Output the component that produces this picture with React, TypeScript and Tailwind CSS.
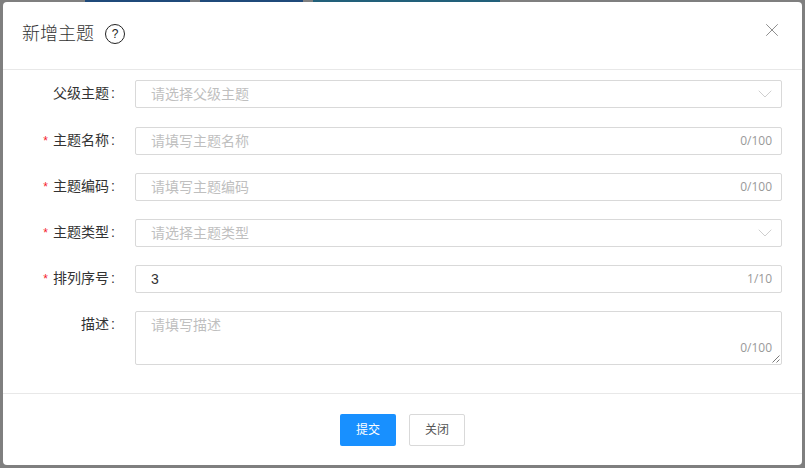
import React from "react";
import { ChevronDown, X } from "lucide-react";

const FONT = "[font-family:'Liberation_Sans','Noto_Sans_CJK_SC',sans-serif]";

function Counter({ text }: { text: string }) {
  return <span className="absolute right-[9px] top-[5px] font-['Open_Sans'] text-[12px] leading-[16px] text-[#999]">{text}</span>;
}

function FieldLabel({ text, required }: { text: string; required?: boolean }) {
  return (
    <label className="flex h-[27px] w-[132px] shrink-0 items-center justify-end pr-[20px] text-[14px] text-[#333]">
      {required && <span className="mr-[5px] text-[12px] text-[#f5222d]">*</span>}
      {text}
      <span className="ml-[2px] w-[4px]">:</span>
    </label>
  );
}

function TextRow({ label, placeholder, counter, value, required }: { label: string; placeholder: string; counter: string; value?: string; required?: boolean }) {
  return (
    <div className="flex h-[28px]">
      <FieldLabel text={label} required={required} />
      <div className="relative h-[28px] flex-1 rounded-[2px] border border-[#d9d9d9] pl-[15px] text-[14px] leading-[26px]">
        {value ? <span className="text-[#333]">{value}</span> : <span className="text-[#bfbfbf]">{placeholder}</span>}
        <Counter text={counter} />
      </div>
    </div>
  );
}

function SelectRow({ label, placeholder, required }: { label: string; placeholder: string; required?: boolean }) {
  return (
    <div className="flex h-[28px]">
      <FieldLabel text={label} required={required} />
      <div className="flex h-[28px] flex-1 items-center justify-between rounded-[2px] border border-[#d9d9d9] pl-[15px] pr-[4px] text-[14px]">
        <span className="text-[#bfbfbf]">{placeholder}</span>
        <ChevronDown className="h-[24px] w-[24px] text-[#bfbfbf]" strokeWidth={0.75} />
      </div>
    </div>
  );
}

export default function App() {
  return (
    <div className={`relative h-[468px] w-[805px] overflow-hidden bg-[#7f7f7f] ${FONT}`}>
      <div className="flex h-[2px] gap-[10px] pl-[85px]">
        <div className="w-[105px] bg-[#1f4a7a]" />
        <div className="w-[103px] bg-[#1f4a7a]" />
        <div className="w-[187px] bg-[#22607a]" />
      </div>

      <div className="absolute left-[3px] top-[2px] flex h-[463px] w-[799px] flex-col rounded-[4px] bg-white">
        <div className="flex h-[68px] items-start justify-between border-b border-[#e8e8e8]">
          <div className="ml-[19px] mt-[20px] flex items-center">
            <span className="text-[18px] font-light leading-[24px] text-[#333]">新增主题</span>
            <span className="ml-[11px] flex h-[20px] w-[20px] items-center justify-center rounded-full border-[1.5px] border-[#222] text-[12px] font-medium leading-none text-[#222]">?</span>
          </div>
          <X className="mr-[19px] mt-[17px] h-[22px] w-[22px] text-[#777]" strokeWidth={0.9} />
        </div>

        <div className="flex h-[324px] shrink-0 flex-col gap-[18px] border-b border-[#e8e8e8] pl-0 pr-[20px] pt-[10px]">
          <SelectRow label="父级主题" placeholder="请选择父级主题" />
          <div className="mt-[1px]">
            <TextRow required label="主题名称" placeholder="请填写主题名称" counter="0/100" />
          </div>
          <TextRow required label="主题编码" placeholder="请填写主题编码" counter="0/100" />
          <SelectRow required label="主题类型" placeholder="请选择主题类型" />
          <TextRow required label="排列序号" placeholder="" value="3" counter="1/10" />
          <div className="flex h-[54px]">
            <FieldLabel text="描述" />
            <div className="relative h-[54px] flex-1 rounded-[2px] border border-[#d9d9d9] pl-[15px] text-[14px] leading-[26px] text-[#bfbfbf]">
              请填写描述
              <span className="absolute bottom-[8px] right-[9px] font-['Open_Sans'] text-[12px] leading-[16px] text-[#999]">0/100</span>
              <svg className="absolute bottom-[1px] right-[1px]" width="8" height="8" viewBox="0 0 8 8" stroke="#555" strokeWidth="0.8">
                <path d="M0.5 7.5 7.5 0.5" />
                <path d="M4.5 7.5 7.5 4.5" />
              </svg>
            </div>
          </div>
        </div>

        <div className="flex flex-1 items-start justify-center gap-[13px] pt-[20px]">
          <button className="h-[32px] w-[56px] rounded-[2px] bg-[#1890ff] text-[12px] text-white">提交</button>
          <button className="h-[32px] w-[56px] rounded-[2px] border border-[#d9d9d9] bg-white text-[12px] text-[#555]">关闭</button>
        </div>
      </div>
    </div>
  );
}
